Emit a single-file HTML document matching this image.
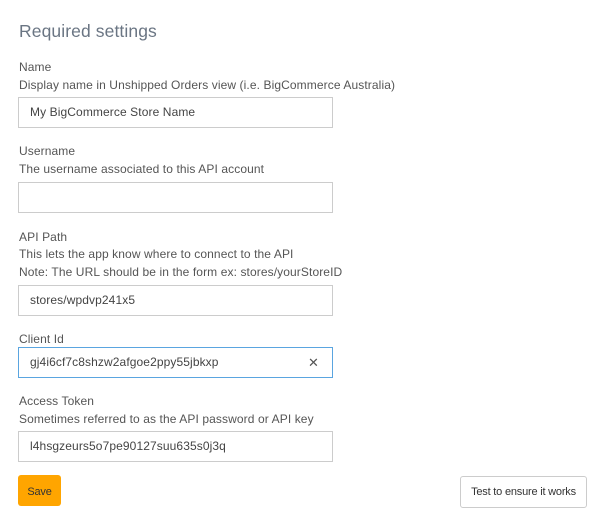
<!DOCTYPE html>
<html><head><meta charset="utf-8"><style>
*{margin:0;padding:0;box-sizing:border-box}
body{width:601px;height:518px;background:#fff;font-family:"Liberation Sans",sans-serif;color:#555;position:relative;overflow:hidden}
.a{position:absolute;left:19px;font-size:12px;letter-spacing:0.1px;white-space:nowrap;line-height:14px}
h1{position:absolute;left:19px;top:21px;font-size:17.5px;font-weight:normal;color:#6a7583;letter-spacing:0.1px}
.in{position:absolute;left:18px;width:315px;height:31px;border:1px solid #ccc;font-size:12px;letter-spacing:0.1px;padding-left:11px;line-height:29px;color:#444}
.foc{border-color:#5aa5e0}
.x{position:absolute;right:13px;top:0;font-size:13px;color:#555}
.btn{position:absolute;font-size:11px;letter-spacing:-0.2px;border-radius:3px;text-align:center;color:#333}
</style></head><body>
<h1>Required settings</h1>
<div class="a" style="top:60px">Name</div>
<div class="a" style="top:78px">Display name in Unshipped Orders view (i.e. BigCommerce Australia)</div>
<div class="in" style="top:97px">My BigCommerce Store Name</div>
<div class="a" style="top:144px">Username</div>
<div class="a" style="top:162px">The username associated to this API account</div>
<div class="in" style="top:182px"></div>
<div class="a" style="top:230px">API Path</div>
<div class="a" style="top:247px">This lets the app know where to connect to the API</div>
<div class="a" style="top:265px">Note: The URL should be in the form ex: stores/yourStoreID</div>
<div class="in" style="top:285px">stores/wpdvp241x5</div>
<div class="a" style="top:332px">Client Id</div>
<div class="in foc" style="top:347px">gj4i6cf7c8shzw2afgoe2ppy55jbkxp<span class="x">✕</span></div>
<div class="a" style="top:394px">Access Token</div>
<div class="a" style="top:412px">Sometimes referred to as the API password or API key</div>
<div class="in" style="top:431px">l4hsgzeurs5o7pe90127suu635s0j3q</div>
<div class="btn" style="left:18px;top:475px;width:43px;height:31px;line-height:34px;background:#ffa500">Save</div>
<div class="btn" style="left:460px;top:476px;width:127px;height:32px;line-height:31px;border:1px solid #ccc">Test to ensure it works</div>
</body></html>
